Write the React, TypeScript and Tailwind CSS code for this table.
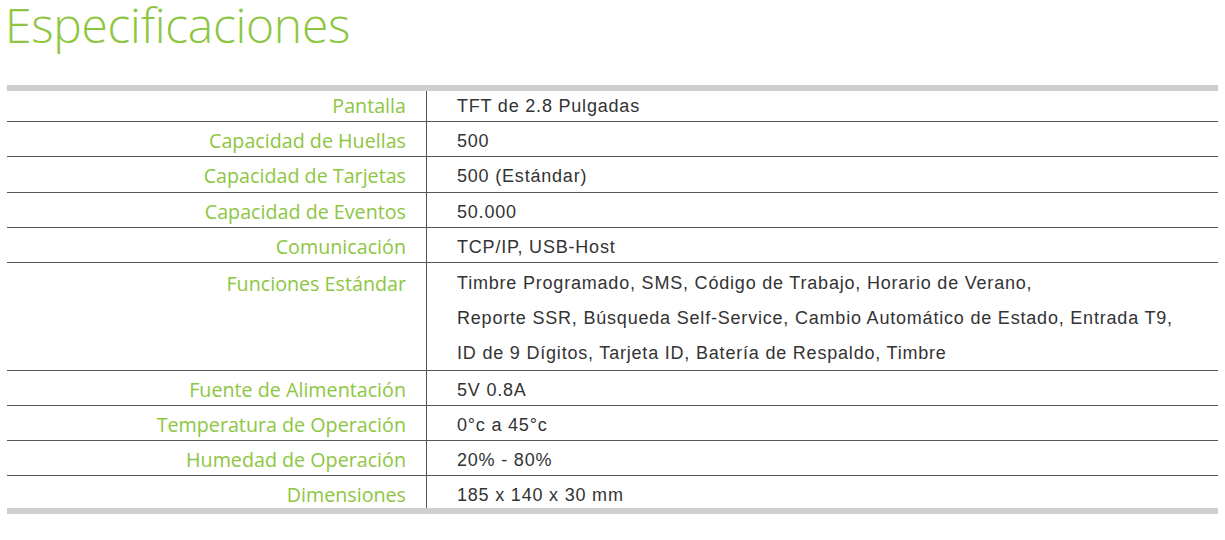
import React from 'react';

interface SpecRow {
  label: string;
  values: string[];
  height: string;
}

const rows: SpecRow[] = [
  { label: 'Pantalla', values: ['TFT de 2.8 Pulgadas'], height: 'h-[31px]' },
  { label: 'Capacidad de Huellas', values: ['500'], height: 'h-[35px]' },
  { label: 'Capacidad de Tarjetas', values: ['500 (Estándar)'], height: 'h-[36px]' },
  { label: 'Capacidad de Eventos', values: ['50.000'], height: 'h-[35px]' },
  { label: 'Comunicación', values: ['TCP/IP, USB-Host'], height: 'h-[35px]' },
  {
    label: 'Funciones Estándar',
    values: [
      'Timbre Programado, SMS, Código de Trabajo, Horario de Verano,',
      'Reporte SSR, Búsqueda Self-Service, Cambio Automático de Estado, Entrada T9,',
      'ID de 9 Dígitos, Tarjeta ID, Batería de Respaldo, Timbre'
    ],
    height: 'h-[108px]'
  },
  { label: 'Fuente de Alimentación', values: ['5V 0.8A'], height: 'h-[35px]' },
  { label: 'Temperatura de Operación', values: ['0°c a 45°c'], height: 'h-[35px]' },
  { label: 'Humedad de Operación', values: ['20% - 80%'], height: 'h-[35px]' },
  { label: 'Dimensiones', values: ['185 x 140 x 30 mm'], height: 'h-[32px]' }
];

export default function App() {
  return (
    <div className="w-[1225px] h-[540px] bg-white overflow-hidden">
      <div className="pt-[1px]">
        <h1 className="pl-[5px] text-[48px] leading-[64px] -mt-[8px] font-light tracking-[-0.3px] text-[#8dc63f] font-['Open_Sans',sans-serif]">
          Especificaciones
        </h1>
      </div>

      <div className="mt-[28px] ml-[7px] w-[1211px] border-t-[6px] border-b-[6px] border-[#cfcfcf]">
        {rows.map((row, i) => {
          const first = i === 0;
          const last = i === rows.length - 1;
          const multi = row.values.length > 1;
          const spacing = first ? 'leading-[30px]' : multi ? 'pt-[3px] leading-[35px]' : 'pt-[2px] leading-[34px]';
          return (
            <div
              key={row.label}
              className={`flex ${row.height} ${last ? '' : 'border-b border-[#555]'}`}
            >
              <div
                className={`w-[419px] shrink-0 pr-[20px] text-right text-[19.7px] text-[#8dc63f] font-['Open_Sans',sans-serif] ${spacing}`}
              >
                {row.label}
              </div>
              <div
                className={`flex-1 border-l border-[#555] pl-[30px] text-[18px] tracking-[0.8px] text-[#333] font-['Liberation_Sans',Arial,sans-serif] ${spacing}`}
              >
                {row.values.map(v => (
                  <div key={v}>{v}</div>
                ))}
              </div>
            </div>
          );
        })}
      </div>
    </div>
  );
}
